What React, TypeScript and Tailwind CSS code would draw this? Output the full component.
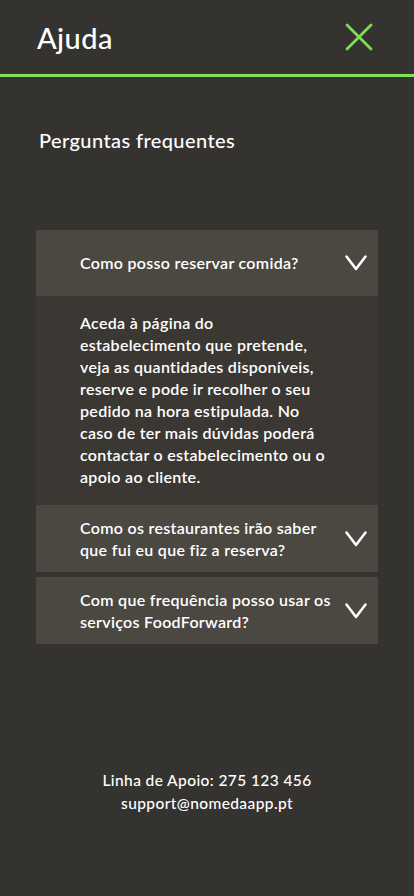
import { useState } from 'react'

const faqs = [
  {
    q: 'Como posso reservar comida?',
    a: 'Aceda à página do estabelecimento que pretende, veja as quantidades disponíveis, reserve e pode ir recolher o seu pedido na hora estipulada. No caso de ter mais dúvidas poderá contactar o estabelecimento ou o apoio ao cliente.',
  },
  {
    q: 'Como os restaurantes irão saber que fui eu que fiz a reserva?',
    a: 'Ao chegar ao estabelecimento basta indicar o seu nome e mostrar a reserva na aplicação.',
  },
  {
    q: 'Com que frequência posso usar os serviços FoodForward?',
    a: 'Pode usar os serviços sempre que quiser, desde que haja disponibilidade.',
  },
]

const Chevron = () => (
  <svg width="24" height="20" viewBox="0 0 24 20" fill="none" className="shrink-0">
    <path d="M2.5 3.5 L12 16 L21.5 3.5" stroke="white" strokeWidth="2.6" strokeLinecap="round" strokeLinejoin="round" />
  </svg>
)

export default function App() {
  const [open, setOpen] = useState<number | null>(0)

  return (
    <div
      className="flex min-h-[896px] w-[414px] flex-col bg-[#353330] text-white"
      style={{ fontFamily: 'Lato, "Noto Sans", sans-serif' }}
    >
      <header className="flex h-[77px] items-center justify-between border-b-[3px] border-[#83e05a] pr-[40px] pl-[37px]">
        <h1 className="pt-[1px] text-[29px] font-medium tracking-[0.4px]">Ajuda</h1>
        <svg width="30" height="30" viewBox="0 0 30 30" fill="none">
          <path d="M3 3 L27 27 M27 3 L3 27" stroke="#7fdc56" strokeWidth="2.8" strokeLinecap="round" />
        </svg>
      </header>

      <h2 className="mt-[48px] pl-[39px] text-[20px] font-medium tracking-[0.4px]">Perguntas frequentes</h2>

      <div className="mx-[36px] mt-[75px] flex flex-col">
        {faqs.map((f, i) => (
          <div key={f.q} className={i > 0 && open !== i - 1 ? 'mt-[5px]' : ''}>
            <button
              type="button"
              onClick={() => setOpen(open === i ? null : i)}
              className="flex min-h-[66px] w-full items-center justify-between bg-[#4b4741] py-[11.5px] pr-[10px] pl-[44px] text-left"
            >
              <span className="pr-2 text-[16px] leading-[22px] font-semibold tracking-[0.3px]">{f.q}</span>
              <Chevron />
            </button>
            {open === i && (
              <div className="bg-[#3b3833] pt-[16px] pr-[50px] pb-[17px] pl-[44px] text-[16px] leading-[22px] font-semibold tracking-[0.3px]">
                {f.a}
              </div>
            )}
          </div>
        ))}
      </div>

      <footer className="mt-auto mb-[81px] text-center text-[15.5px] leading-[23px] font-medium tracking-[0.4px]">
        <p>Linha de Apoio: 275 123 456</p>
        <p>support@nomedaapp.pt</p>
      </footer>
    </div>
  )
}
